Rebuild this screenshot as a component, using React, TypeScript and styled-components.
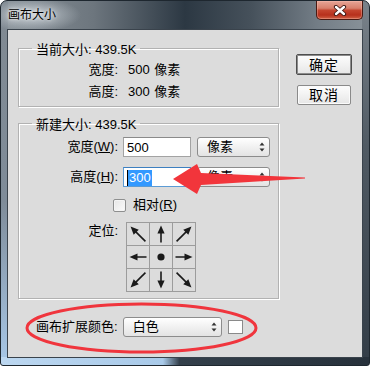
import React from "react";
import styled, { createGlobalStyle } from "styled-components";

const Global = createGlobalStyle`
  html, body { margin: 0; padding: 0; background: #ffffff; }
  body { font-family: "Liberation Sans", "Noto Sans CJK SC", sans-serif; font-size: 13px; color: #000; }
  * { box-sizing: border-box; }
`;

const Window = styled.div`
  position: relative;
  width: 370px;
  height: 366px;
  border: 1px solid #1e272f;
  border-radius: 7px 7px 3px 3px;
  display: flex;
  flex-direction: column;
  overflow: hidden;
  background:
    linear-gradient(90deg, #bcd7f0 0%, #a9cae9 44%, #34404b 48.5%, #27313b 100%) left bottom / 100% 8px no-repeat,
    linear-gradient(180deg, #808991 0%, #7f8c99 55%, #a8c8e8 100%) left top / 7px 100% no-repeat,
    linear-gradient(180deg, #7a838b 0%, #505a63 40%, #333d47 100%) right top / 7px 100% no-repeat,
    linear-gradient(90deg, #8a939a 0%, #6d767e 25%, #2c3843 50%, #46515b 68%, #737d86 86%, #8a939a 100%);
`;

const TitleBar = styled.div`
  height: 28px;
  flex: none;
  display: flex;
  justify-content: space-between;
  align-items: flex-start;
  background: radial-gradient(ellipse 48px 17px at 32px 14px, rgba(215, 222, 228, 0.75), rgba(215, 222, 228, 0) 100%);
`;

const TitleText = styled.div`
  margin: 6px 0 0 7px;
  font-size: 12px;
  line-height: 16px;
  color: #000;
  text-shadow: 0 0 6px rgba(255, 255, 255, 0.9), 0 0 3px rgba(255, 255, 255, 0.7);
`;

const CloseButton = styled.div`
  width: 47px;
  height: 19px;
  margin-right: 6px;
  border: 1px solid #4a1a12;
  border-top: none;
  border-radius: 0 0 5px 5px;
  background: linear-gradient(180deg, #e7a596 0%, #d8806c 40%, #c4452f 52%, #b7301c 78%, #cf6246 100%);
  box-shadow: inset 0 0 0 1px rgba(255, 200, 190, 0.35);
  display: flex;
  align-items: center;
  justify-content: center;
`;

const Body = styled.div`
  flex: 1;
  margin: 0 6px 7px 6px;
  border: 1px solid #3a434c;
  background: #dcdcdc;
  display: flex;
  padding: 8px 10px 0 10px;
`;

const LeftColumn = styled.div`
  width: 261px;
  display: flex;
  flex-direction: column;
`;

const RightColumn = styled.div`
  margin-left: auto;
  padding-top: 16px;
  display: flex;
  flex-direction: column;
  align-items: center;
  gap: 10px;
  width: 56px;
`;

const Group = styled.fieldset<{ $mt?: number }>`
  margin: ${(p) => p.$mt ?? 0}px 0 0 0;
  padding: 0;
  min-width: 0;
  border: 1px solid #b2b2b2;
  box-shadow: 1px 1px 0 #ffffff, inset 1px 1px 0 #ffffff;
`;

const Legend = styled.legend`
  margin-left: 13px;
  padding: 4px 4px 0 4px;
  line-height: 16px;
  font-size: 13px;
`;

const InfoGrid = styled.div`
  display: grid;
  grid-template-columns: 99px auto;
  column-gap: 10px;
  grid-auto-rows: 22px;
  align-items: center;
  padding: 1px 0 3px 0;
`;

const InfoLabel = styled.div`
  text-align: right;
  line-height: 16px;
`;

const InfoValue = styled.div`
  line-height: 16px;
  word-spacing: 1px;
`;

const FieldRow = styled.div<{ $mt: number }>`
  display: flex;
  align-items: center;
  margin-top: ${(p) => p.$mt}px;
  height: 20px;
`;

const FieldLabel = styled.div`
  width: 99px;
  text-align: right;
  line-height: 16px;
  margin-right: 5px;
  flex: none;
`;

const Key = styled.span`
  text-decoration: underline;
`;

const TextInput = styled.div<{ $focused?: boolean }>`
  width: 68px;
  height: 20px;
  background: #ffffff;
  border: 1px solid ${(p) => (p.$focused ? "#5b9bd5" : "#a3a3a3")};
  border-top-color: ${(p) => (p.$focused ? "#3d7fc0" : "#8a8a8a")};
  padding: 1px 0 0 3px;
  display: flex;
  align-items: center;
  margin-right: 6px;
  font-size: 13px;
  line-height: 16px;
`;

const Selected = styled.span`
  background: #3399ff;
  color: #ffffff;
  padding: 0 1px;
  border-left: 1px solid #000;
`;

const SelectBox = styled.div<{ $w: number }>`
  width: ${(p) => p.$w}px;
  height: 20px;
  border: 1px solid #8c8c8c;
  border-radius: 3px;
  background: linear-gradient(180deg, #ffffff 0%, #f1f1f1 50%, #e3e3e3 100%);
  display: flex;
  align-items: center;
  justify-content: space-between;
  padding: 0 4px 0 9px;
  line-height: 16px;
  flex: none;
`;

const CheckRow = styled.div`
  display: flex;
  align-items: center;
  margin-top: 10px;
  padding-left: 94px;
  height: 16px;
  gap: 7px;
  line-height: 16px;
`;

const CheckBox = styled.div`
  width: 13px;
  height: 13px;
  border: 1px solid #8e8f8f;
  border-radius: 2px;
  background: linear-gradient(135deg, #e6e6e6 0%, #fbfbfb 100%);
  box-shadow: inset 0 0 0 1px #f4f4f4;
`;

const AnchorRow = styled.div`
  display: flex;
  align-items: flex-start;
  margin-top: 9px;
  padding-bottom: 6px;
`;

const AnchorLabel = styled(FieldLabel)`
  margin-top: 1px;
`;

const AnchorGrid = styled.div`
  margin-left: 3px;
  display: grid;
  grid-template-columns: repeat(3, 22px);
  grid-template-rows: repeat(3, 22px);
  gap: 1px;
  padding: 1px;
  background: #9c9c9c;
`;

const AnchorCell = styled.div`
  background: #dcdcdc;
  display: flex;
  align-items: center;
  justify-content: center;
`;

const BottomRow = styled.div`
  display: flex;
  align-items: center;
  margin-top: 18px;
  padding-left: 18px;
  gap: 5px;
  line-height: 16px;
`;

const Swatch = styled.div`
  width: 15px;
  height: 14px;
  margin-left: 1px;
  border: 1px solid #8a8a8a;
  background: #ffffff;
`;

const Button = styled.div<{ $default?: boolean }>`
  width: ${(p) => (p.$default ? 56 : 54)}px;
  height: ${(p) => (p.$default ? 21 : 20)}px;
  border: 1px solid ${(p) => (p.$default ? "#4e4e4e" : "#8a8a8a")};
  border-radius: 2px;
  box-shadow: ${(p) => (p.$default ? "inset 0 0 0 1px #8c8c8c" : "inset 0 0 0 1px #fbfbfb")};
  background: linear-gradient(180deg, #fdfdfd 0%, #f2f2f2 50%, #e6e6e6 100%);
  display: flex;
  align-items: center;
  justify-content: center;
  font-size: 14px;
  line-height: 16px;
  letter-spacing: 1px;
`;

const Overlay = styled.svg`
  position: absolute;
  left: -1px;
  top: -1px;
  width: 370px;
  height: 366px;
  pointer-events: none;
`;

const SpinArrows = () => (
  <svg width="6" height="10" viewBox="0 0 6 10">
    <path d="M3 0.5 L5.5 3.5 L0.5 3.5 Z" fill="#333" />
    <path d="M3 9.5 L5.5 6.5 L0.5 6.5 Z" fill="#333" />
  </svg>
);

type Dir = "n" | "ne" | "e" | "se" | "s" | "sw" | "w" | "nw" | "c";
const angles: Record<Exclude<Dir, "c">, number> = {
  n: 0, ne: 45, e: 90, se: 135, s: 180, sw: 225, w: 270, nw: 315,
};

const AnchorArrow = ({ dir }: { dir: Dir }) => {
  if (dir === "c") {
    return (
      <svg width="22" height="22" viewBox="0 0 22 22">
        <circle cx="11" cy="11" r="3.6" fill="#1a1a1a" />
      </svg>
    );
  }
  const diag = dir.length === 2;
  const L = diag ? 21 : 17;
  const top = 11 - L / 2;
  const bottom = 11 + L / 2;
  return (
    <svg width="22" height="22" viewBox="0 0 22 22">
      <g transform={`rotate(${angles[dir]} 11 11)`}>
        <line x1="11" y1={bottom} x2="11" y2={top + 5} stroke="#1a1a1a" strokeWidth="1.6" />
        <path d={`M11 ${top} L14.6 ${top + 8} L7.4 ${top + 8} Z`} fill="#1a1a1a" />
      </g>
    </svg>
  );
};

const anchors: Dir[] = ["nw", "n", "ne", "w", "c", "e", "sw", "s", "se"];

export default function App() {
  return (
    <>
      <Global />
      <Window>
        <TitleBar>
          <TitleText>画布大小</TitleText>
          <CloseButton>
            <svg width="14" height="11" viewBox="0 0 14 11">
              <path d="M3 2 L11 9 M11 2 L3 9" stroke="#3a1510" strokeWidth="4.2" strokeLinecap="round" />
              <path d="M3 2 L11 9 M11 2 L3 9" stroke="#ffffff" strokeWidth="2.4" strokeLinecap="round" />
            </svg>
          </CloseButton>
        </TitleBar>
        <Body>
          <LeftColumn>
            <Group>
              <Legend>当前大小: 439.5K</Legend>
              <InfoGrid>
                <InfoLabel>宽度:</InfoLabel>
                <InfoValue>500 像素</InfoValue>
                <InfoLabel>高度:</InfoLabel>
                <InfoValue>300 像素</InfoValue>
              </InfoGrid>
            </Group>
            <Group $mt={6}>
              <Legend>新建大小: 439.5K</Legend>
              <FieldRow $mt={4}>
                <FieldLabel>
                  宽度(<Key>W</Key>):
                </FieldLabel>
                <TextInput>500</TextInput>
                <SelectBox $w={73}>
                  <span>像素</span>
                  <SpinArrows />
                </SelectBox>
              </FieldRow>
              <FieldRow $mt={10}>
                <FieldLabel>
                  高度(<Key>H</Key>):
                </FieldLabel>
                <TextInput $focused>
                  <Selected>300</Selected>
                </TextInput>
                <SelectBox $w={73}>
                  <span>像素</span>
                  <SpinArrows />
                </SelectBox>
              </FieldRow>
              <CheckRow>
                <CheckBox />
                <span>
                  相对(<Key>R</Key>)
                </span>
              </CheckRow>
              <AnchorRow>
                <AnchorLabel>定位:</AnchorLabel>
                <AnchorGrid>
                  {anchors.map((d) => (
                    <AnchorCell key={d}>
                      <AnchorArrow dir={d} />
                    </AnchorCell>
                  ))}
                </AnchorGrid>
              </AnchorRow>
            </Group>
            <BottomRow>
              <span>画布扩展颜色:</span>
              <SelectBox $w={99}>
                <span>白色</span>
                <SpinArrows />
              </SelectBox>
              <Swatch />
            </BottomRow>
          </LeftColumn>
          <RightColumn>
            <Button $default>确定</Button>
            <Button>取消</Button>
          </RightColumn>
        </Body>
        <Overlay viewBox="0 0 370 366">
          <ellipse cx="141.5" cy="328" rx="114.5" ry="24" fill="none" stroke="#f0353d" strokeWidth="3" />
          <path
            d="M173 179 L197 164 L201 173 L305 177.4 L305 178.6 L201 185 L197 194 Z"
            fill="#f2353b"
          />
        </Overlay>
      </Window>
    </>
  );
}
